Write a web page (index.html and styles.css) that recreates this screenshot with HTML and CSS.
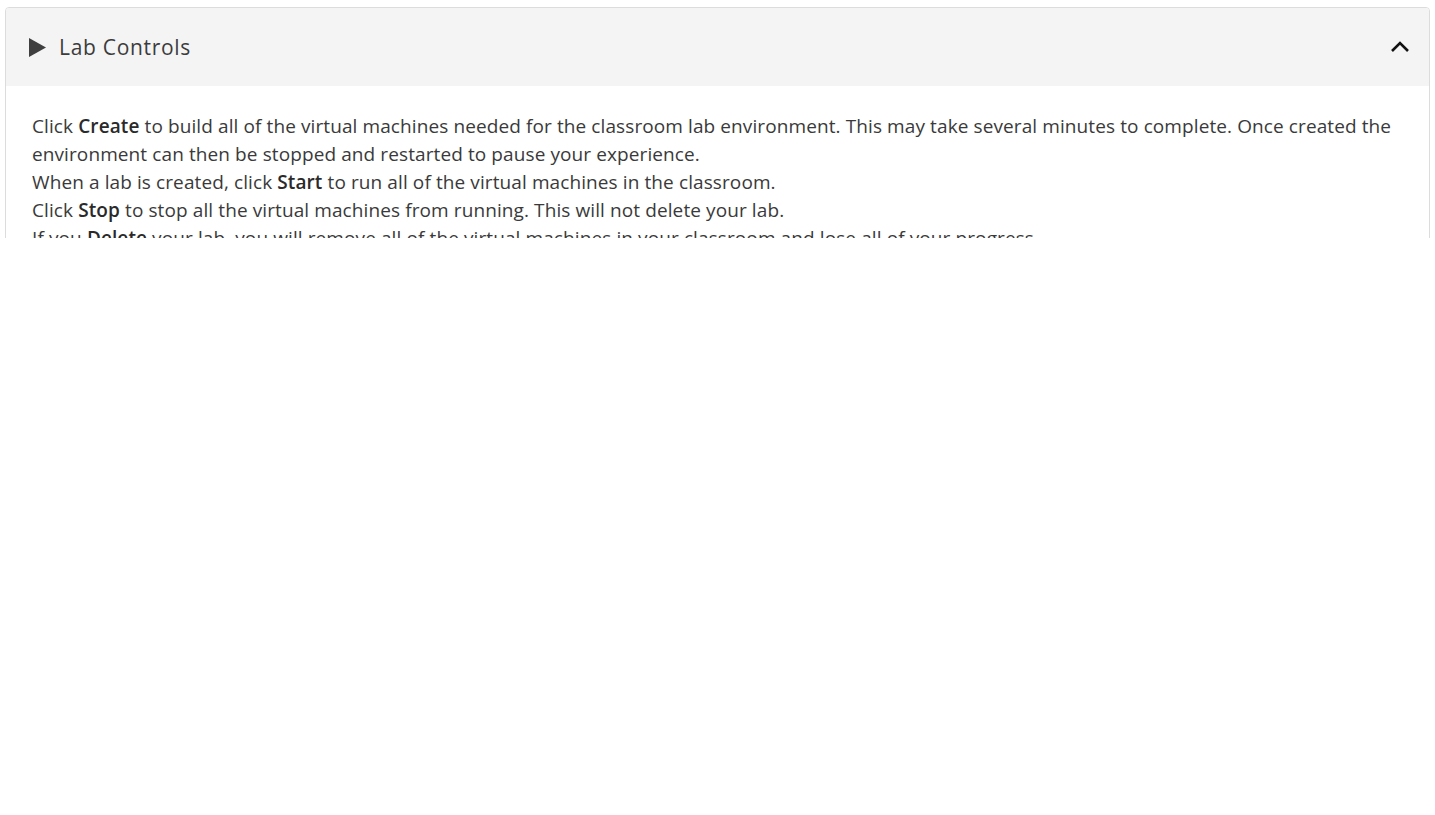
FILE: index.html
```html
<!DOCTYPE html>
<html lang="en">
<head>
<meta charset="utf-8">
<title>Lab Controls</title>
<link rel="stylesheet" href="styles.css">
</head>
<body>
<div class="frame">
  <section class="panel">
    <header class="panel-head">
      <div class="title">
        <svg class="play" viewBox="0 0 18 20" width="17" height="19" aria-hidden="true"><polygon points="0,0 18,10 0,20" fill="#3f3f3f"/></svg>
        <span>Lab Controls</span>
      </div>
      <svg class="chevron" viewBox="0 0 20 14" width="20" height="14" aria-hidden="true"><polyline points="2,11 10,3 18,11" fill="none" stroke="#111" stroke-width="2.6"/></svg>
    </header>
    <div class="panel-body">
      <p>Click <b>Create</b> to build all of the virtual machines needed for the classroom lab environment. This may take several minutes to complete. Once created the environment can then be stopped and restarted to pause your experience.</p>
      <p>When a lab is created, click <b>Start</b> to run all of the virtual machines in the classroom.</p>
      <p>Click <b>Stop</b> to stop all the virtual machines from running. This will not delete your lab.</p>
      <p>If you <b>Delete</b> your lab, you will remove all of the virtual machines in your classroom and lose all of your progress.</p>
    </div>
  </section>
</div>
</body>
</html>
```

FILE: styles.css
```css
html, body {
  margin: 0;
  padding: 0;
  background: #fff;
}

.frame {
  height: 238px;
  overflow: hidden;
  padding: 7px 5px 0 5px;
  box-sizing: border-box;
}

.panel {
  border: 1px solid #dcdcdc;
  border-radius: 4px;
  overflow: hidden;
  font-family: "Open Sans", "Liberation Sans", sans-serif;
  color: #3a3a3a;
}

.panel-head {
  height: 78px;
  background: #f4f4f4;
  display: flex;
  align-items: center;
  justify-content: space-between;
  padding: 0 19px 0 23px;
}

.title {
  display: flex;
  align-items: center;
  gap: 13px;
  font-size: 21px;
  letter-spacing: 0.7px;
  color: #3c3c3c;
}

.play {
  display: block;
}

.chevron {
  display: block;
}

.panel-body {
  padding: 26px 26px 20px 26px;
  font-size: 19px;
  letter-spacing: 0.1px;
  line-height: 28px;
}

.panel-body p {
  margin: 0;
}

.panel-body b {
  font-weight: 600;
  color: #2a2a2a;
}
```
